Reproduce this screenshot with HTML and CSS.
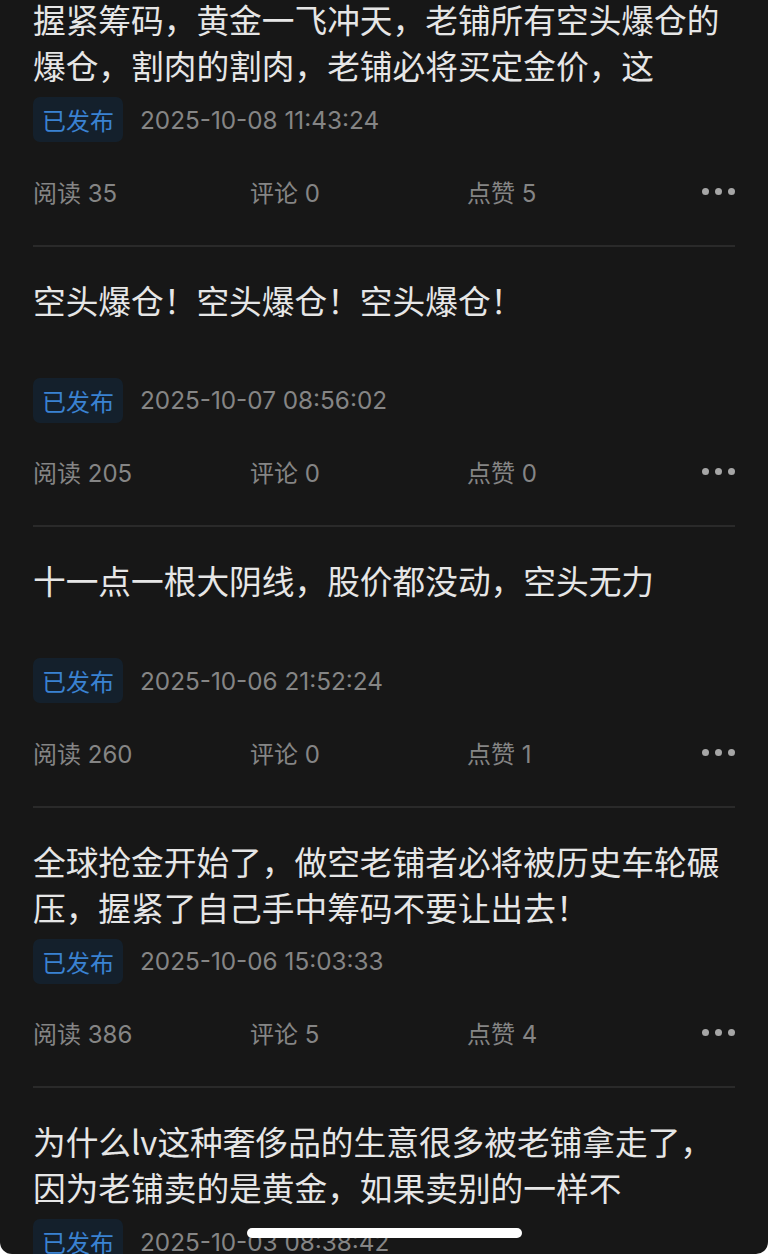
FILE: index.html
```html
<!DOCTYPE html>
<html lang="zh-CN">
<head>
<meta charset="utf-8">
<title>我的帖子</title>
<link rel="stylesheet" href="styles.css">
</head>
<body>
<div class="screen">
  <div class="list">
    <div class="item">
      <div class="title">握紧筹码，黄金一飞冲天，老铺所有空头爆仓的<br>爆仓，割肉的割肉，老铺必将买定金价，这</div>
      <div class="meta"><span class="badge">已发布</span><span class="date">2025-10-08 11:43:24</span></div>
      <div class="stats"><span>阅读 35</span><span>评论 0</span><span>点赞 5</span><span class="more"><i></i><i></i><i></i></span></div>
    </div>
    <div class="item">
      <div class="title">空头爆仓！空头爆仓！空头爆仓！</div>
      <div class="meta"><span class="badge">已发布</span><span class="date">2025-10-07 08:56:02</span></div>
      <div class="stats"><span>阅读 205</span><span>评论 0</span><span>点赞 0</span><span class="more"><i></i><i></i><i></i></span></div>
    </div>
    <div class="item">
      <div class="title">十一点一根大阴线，股价都没动，空头无力</div>
      <div class="meta"><span class="badge">已发布</span><span class="date">2025-10-06 21:52:24</span></div>
      <div class="stats"><span>阅读 260</span><span>评论 0</span><span>点赞 1</span><span class="more"><i></i><i></i><i></i></span></div>
    </div>
    <div class="item">
      <div class="title">全球抢金开始了，做空老铺者必将被历史车轮碾<br>压，握紧了自己手中筹码不要让出去！</div>
      <div class="meta"><span class="badge">已发布</span><span class="date">2025-10-06 15:03:33</span></div>
      <div class="stats"><span>阅读 386</span><span>评论 5</span><span>点赞 4</span><span class="more"><i></i><i></i><i></i></span></div>
    </div>
    <div class="item">
      <div class="title">为什么lv这种奢侈品的生意很多被老铺拿走了，<br>因为老铺卖的是黄金，如果卖别的一样不</div>
      <div class="meta"><span class="badge">已发布</span><span class="date">2025-10-03 08:38:42</span></div>
      <div class="stats"><span>阅读 120</span><span>评论 0</span><span>点赞 2</span><span class="more"><i></i><i></i><i></i></span></div>
    </div>
  </div>
  <div class="home-indicator"></div>
</div>
</body>
</html>
```

FILE: styles.css
```css
html, body {
  margin: 0;
  padding: 0;
  background: #ffffff;
}

.screen {
  position: relative;
  height: 1254px;
  overflow: hidden;
  background: #171717;
  border-radius: 0 0 12px 12px;
  font-family: "Inter", "Noto Sans CJK SC", sans-serif;
}

.list {
  margin-top: -34px;
  padding: 0 33px;
}

.item {
  height: 280.6px;
  box-sizing: border-box;
  padding-top: 30px;
  border-bottom: 2px solid #2a2a2a;
  display: flex;
  flex-direction: column;
}

.title {
  height: 92px;
  font-family: "Noto Sans CJK SC", sans-serif;
  font-size: 32.7px;
  line-height: 46px;
  color: #e6e6e6;
  white-space: nowrap;
}

.meta {
  margin-top: 9px;
  display: flex;
  align-items: center;
  gap: 17px;
  height: 45px;
}

.badge {
  height: 45px;
  padding: 0 9px;
  display: flex;
  align-items: center;
  border-radius: 7px;
  background: #14202c;
  color: #3a82d2;
  font-family: "Noto Sans CJK SC", sans-serif;
  font-size: 24px;
}

.date {
  font-size: 24.3px;
  color: #858585;
}

.stats {
  margin-top: 26px;
  height: 46px;
  display: grid;
  grid-template-columns: 217px 217px 1fr auto;
  align-items: center;
  font-size: 24px;
  color: #858585;
}

.more {
  display: flex;
  gap: 6px;
}

.more i {
  width: 7px;
  height: 7px;
  border-radius: 50%;
  background: #a6a6a6;
}

.home-indicator {
  position: absolute;
  left: 247px;
  top: 1228px;
  width: 275px;
  height: 10px;
  border-radius: 5px;
  background: #ffffff;
}
```
